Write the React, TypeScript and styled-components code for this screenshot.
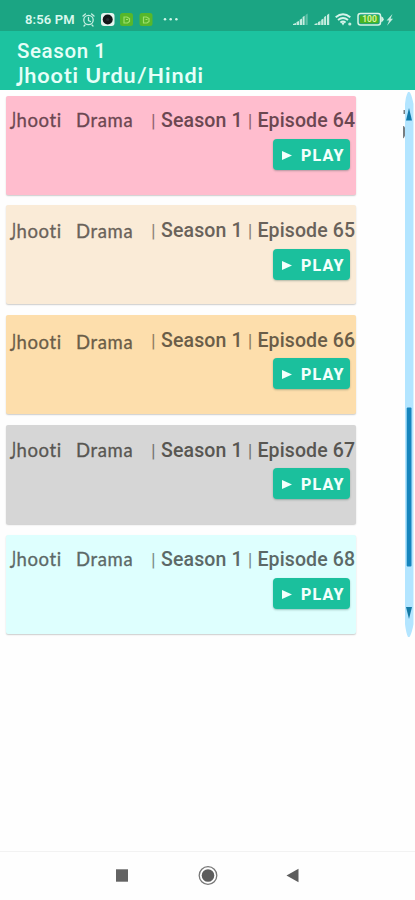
import React from 'react';
import styled, { createGlobalStyle } from 'styled-components';

const GlobalStyle = createGlobalStyle`
  * { box-sizing: border-box; }
  body { margin: 0; background: #fefefe; font-family: Roboto, sans-serif; }
`;

const Screen = styled.div`
  display: flex;
  flex-direction: column;
  width: 415px;
  height: 900px;
  overflow: hidden;
  background: #fefefe;
`;

const StatusBar = styled.div`
  display: flex;
  align-items: center;
  flex: none;
  height: 31px;
  padding: 8px 21px 0 25px;
  background: #1ba583;
  color: #d9f8ee;
`;

const Clock = styled.span`
  width: 57px;
  font-size: 13px;
  font-weight: 600;
  line-height: 16px;
  letter-spacing: 0.15px;
  white-space: nowrap;
`;

const StatusIcons = styled.svg`
  display: block;
  flex: none;
`;

const Spacer = styled.div`
  flex: 1;
`;

const Header = styled.header`
  flex: none;
  height: 59px;
  padding: 8px 17px 0;
  background: #1cc3a0;
  color: #e6fff8;
`;

const HeaderSeason = styled.div`
  height: 24px;
  font-size: 20.5px;
  font-weight: 500;
  line-height: 24px;
  letter-spacing: 0.6px;
`;

const HeaderTitle = styled.div`
  height: 24px;
  font-family: Lato, sans-serif;
  font-size: 21.5px;
  font-weight: 700;
  line-height: 24px;
  letter-spacing: 0.95px;
  font-variant-ligatures: none;
`;

/* The capital J hangs below the baseline in the display lettering. */
const HangingJ = styled.span`
  display: inline-block;
  margin: 0 -1px 0 -2px;
  transform: translateY(-1px) scale(0.8, 1.2);
  transform-origin: 50% 0;
`;

const Content = styled.main`
  display: flex;
  flex: 1;
  justify-content: space-between;
  padding-left: 6px;
`;

const EpisodeList = styled.div`
  display: flex;
  flex-direction: column;
  gap: 10.75px;
  width: 350px;
  padding-top: 5.6px;
`;

const Card = styled.article<{ $tint: string }>`
  flex: none;
  height: 99px;
  padding: 14.8px 0 0 5px;
  border-radius: 2px;
  background: ${(p) => p.$tint};
  box-shadow: 0 1px 1.5px rgba(0, 0, 0, 0.2);
`;

const TitleRow = styled.div<{ $ink: string }>`
  display: grid;
  grid-template-columns: 65px 75px 10px 1fr;
  height: 22px;
  line-height: 22px;
  color: ${(p) => p.$ink};
  white-space: nowrap;
`;

const DramaWord = styled.span<{ $drop: number }>`
  padding-top: ${(p) => p.$drop}px;
  font-family: Lato, sans-serif;
  font-size: 18.5px;
  line-height: 21px;
  letter-spacing: 0.65px;
  font-variant-ligatures: none;
  -webkit-text-stroke: 0.3px currentColor;
`;

const Bar = styled.span`
  font-size: 19px;
  font-weight: 400;
  opacity: 0.75;
`;

const Episode = styled.span`
  font-size: 19.5px;
  font-weight: 500;
  letter-spacing: 0.13px;
`;

const PlayButton = styled.button`
  display: flex;
  align-items: center;
  width: 77px;
  height: 31px;
  margin: 6.6px 0 0 262.4px;
  padding: 2px 0 0 8.5px;
  gap: 9px;
  border: 0;
  border-radius: 4px;
  background: #1bc09d;
  box-shadow: 0 1px 2px rgba(0, 60, 50, 0.3);
  color: #f4fffc;
  font-family: Roboto, sans-serif;
  font-size: 16px;
  font-weight: 800;
  letter-spacing: 1.2px;
`;

const Rail = styled.div`
  display: flex;
  width: 13px;
`;

const NavBar = styled.nav`
  display: flex;
  align-items: center;
  justify-content: center;
  flex: none;
  height: 49px;
  padding: 0 2px 2px 0;
  border-top: 1px solid #f2f2f2;
`;

const episodes = [
  { number: 64, tint: '#ffbdce', ink: '#6b4751', drop: 0 },
  { number: 65, tint: '#faebd7', ink: '#69625a', drop: 1 },
  { number: 66, tint: '#fddeac', ink: '#6a5d48', drop: 2 },
  { number: 67, tint: '#d6d6d6', ink: '#585652', drop: 0 },
  { number: 68, tint: '#defffe', ink: '#5c6967', drop: 0 },
];

const NotificationIcons = () => (
  <StatusIcons width="100" height="18" viewBox="82 11 100 18" fill="none">
    <g stroke="#c7efe2" strokeWidth="1.3" strokeLinecap="round">
      <circle cx="88.5" cy="20" r="4.7" />
      <path d="M88.5 17.5v3l2 1M83 16l2.4-2M94 16l-2.4-2M85 25l-1 1M92 25l1 1" />
    </g>
    <rect x="101" y="13" width="13.5" height="13" rx="3" fill="#e5f5ef" />
    <circle cx="107.7" cy="19.5" r="5" fill="#14171a" />
    <circle cx="107.7" cy="19.5" r="1.6" fill="#272b32" />
    {[120, 139.5].map((x) => (
      <g key={x}>
        <rect x={x} y="13" width="13" height="13" rx="2.5" fill="#57b72a" />
        <path d={`M${x + 4} 17h3l2.5 1.5v3l-2 1.5h-3.5z M${x + 6} 19.5h2`} stroke="#9de06b" strokeWidth="1.2" />
      </g>
    ))}
    <g fill="#d1f5e9">
      <circle cx="165" cy="19.3" r="1.25" />
      <circle cx="170.7" cy="19.3" r="1.25" />
      <circle cx="176.4" cy="19.3" r="1.25" />
    </g>
  </StatusIcons>
);

const SystemIcons = () => (
  <StatusIcons width="103" height="18" viewBox="291 11 103 18" fill="none">
    <g fill="#c5ecdf">
      {[293, 314.5].map((x) => (
        <g key={x}>
          <path d={`M${x} 25v-1l3-1v2z`} />
          <path d={`M${x + 3.5} 25v-3l2.5-1v4zM${x + 6.7} 25v-5.3l2.3-1.2V25zM${x + 9.6} 25v-8l2-1.3V25z`} />
          <path d={`M${x + 12.5} 25V15l2.2-1.4V25z`} opacity={x === 293 ? 0.4 : 1} />
        </g>
      ))}
      <circle cx="349.8" cy="24" r="1.6" />
      <path d="M387 25.7l6-7h-2.4l1.8-4.7-5.8 6.6h2.6z" />
    </g>
    <g stroke="#d5f4ea" strokeWidth="1.9">
      <path d="M335.7 17.3q7.3-6.2 14.6 0M338 20q5-4 10 0M340.4 22.5q2.6-2 5.2 0" />
    </g>
    <path d="M341.2 22.5l1.8 3 1.8-3z" fill="#d5f4ea" />
    <rect x="358" y="13.6" width="22.5" height="11.5" rx="2.5" stroke="#d8f3e5" strokeWidth="1.5" />
    <path d="M381.2 16.3q2.5 1 2.5 3t-2.5 3z" fill="#d8f3e5" />
    <rect x="360" y="15.5" width="18.5" height="7.8" rx="1" fill="#48b522" />
    <text x="369.5" y="22.4" textAnchor="middle" fill="#dcf6a8" fontFamily="Roboto, sans-serif" fontSize="8.5" fontWeight="600">100</text>
  </StatusIcons>
);

const App = () => (
  <>
    <GlobalStyle />
    <Screen>
      <StatusBar>
        <Clock>8:56 PM</Clock>
        <NotificationIcons />
        <Spacer />
        <SystemIcons />
      </StatusBar>
      <Header>
        <HeaderSeason>Season 1</HeaderSeason>
        <HeaderTitle><HangingJ>J</HangingJ>hooti Urdu/Hindi</HeaderTitle>
      </Header>
      <Content>
        <EpisodeList>
          {episodes.map((e) => (
            <Card key={e.number} $tint={e.tint}>
              <TitleRow $ink={e.ink}>
                <DramaWord $drop={e.drop}><HangingJ>J</HangingJ>hooti</DramaWord>
                <DramaWord $drop={e.drop}>Drama</DramaWord>
                <Bar>|</Bar>
                <Episode>Season 1 <Bar>|</Bar> Episode {e.number}</Episode>
              </TitleRow>
              <PlayButton>
                <svg width="10" height="9" viewBox="0 0 10 9"><path d="M0 0l10 4.5L0 9z" fill="#f4fffc" /></svg>
                PLAY
              </PlayButton>
            </Card>
          ))}
        </EpisodeList>
        <Rail>
          <svg width="13" height="548" viewBox="402 90 13 548">
            <path d="M403.5 110h2v4h-2zM403 126q2.5 0 2.5 5.5t-2.5 7z" fill="#777d80" />
            <path d="M405 104q1-9 3-12h1.5q2 2 4 12v520q-1.5 9-4 13H408q-2-4-3-13z" fill="#b3e5ff" />
            <path d="M409 108l3 12.5h-6z" fill="#117aaa" />
            <rect x="406.7" y="407.5" width="4.8" height="159" rx="1" fill="#1685bd" />
            <path d="M406 607h6l-3 12z" fill="#147aa5" />
          </svg>
        </Rail>
      </Content>
      <NavBar>
        <svg width="190" height="24" viewBox="112 863 190 24">
          <rect x="116" y="869.3" width="12" height="12.4" fill="#636363" />
          <circle cx="208" cy="875.5" r="8.8" fill="none" stroke="#777" strokeWidth="1.3" />
          <circle cx="208" cy="875.5" r="6.3" fill="#5c5c5c" />
          <path d="M286.5 875.5l12-6.7v13.4z" fill="#5d5d5d" />
        </svg>
      </NavBar>
    </Screen>
  </>
);

export default App;
